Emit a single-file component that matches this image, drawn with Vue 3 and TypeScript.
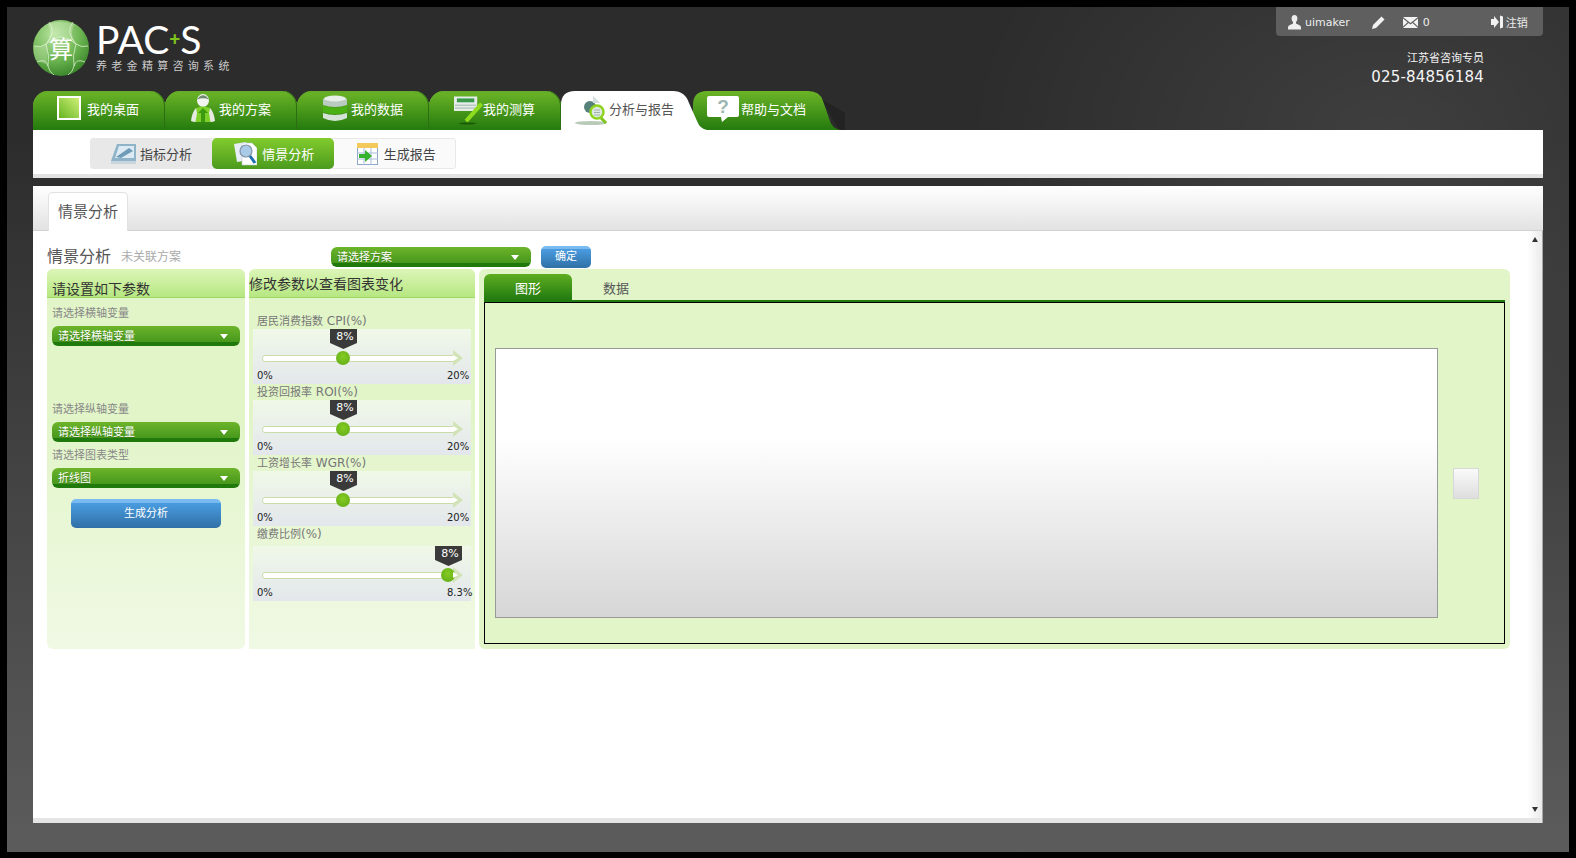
<script setup lang="ts">
import { ref } from 'vue'

interface SliderItem {
  name: string
  unit: string
  flag: string
  left: number
  max: string
  tall?: boolean
}

const navTabs = [
  { key: 'desk', label: '我的桌面' },
  { key: 'plan', label: '我的方案' },
  { key: 'data', label: '我的数据' },
  { key: 'calc', label: '我的测算' },
]

const sliders = ref<SliderItem[]>([
  { name: '居民消费指数', unit: ' CPI(%)', flag: '8%', left: 90, max: '20%' },
  { name: '投资回报率', unit: ' ROI(%)', flag: '8%', left: 90, max: '20%' },
  { name: '工资增长率', unit: ' WGR(%)', flag: '8%', left: 90, max: '20%' },
  { name: '缴费比例', unit: '(%)', flag: '8%', left: 195, max: '8.3%', tall: true },
])
</script>

<template>
  <div class="frame">
    <header class="top">
      <div class="logo">
        <svg class="globe" width="56" height="56" viewBox="0 0 56 56">
          <defs>
            <radialGradient id="ball" cx="0.38" cy="0.25" r="0.85">
              <stop offset="0" stop-color="#b9e4a0" />
              <stop offset="0.55" stop-color="#6db552" />
              <stop offset="1" stop-color="#2d7a20" />
            </radialGradient>
          </defs>
          <circle cx="28" cy="28" r="28" fill="url(#ball)" />
          <path d="M14 4Q26 0 42 4Q36 12 42 22Q28 12 14 22Q20 12 14 4Z" fill="#d8f0c6" fill-opacity="0.35" />
          <path d="M1 26Q8 28 13 24Q16 34 13 44Q6 42 3 40Q0 34 1 26Z" fill="#d8f0c6" fill-opacity="0.3" />
          <g fill="none" stroke="#e9f8dd" stroke-opacity="0.7" stroke-width="1">
            <path d="M16 2Q24 12 13 24Q8 28 1 26" />
            <path d="M40 2Q32 12 43 24Q48 28 55 26" />
            <path d="M4 42Q13 38 15 46Q16 52 21 55" />
            <path d="M52 42Q43 38 41 46Q40 52 35 55" />
            <path d="M13 24Q28 10 43 24" />
            <path d="M13 24Q17 36 15 46M43 24Q39 36 41 46" />
          </g>
          <text x="28" y="38" text-anchor="middle" font-size="24" fill="#fff" font-family="'Noto Sans CJK SC', sans-serif">算</text>
        </svg>
        <div class="brand">
          <div class="brand-name"><span>PAC</span><span class="plus">+</span><span>S</span></div>
          <div class="brand-sub">养老金精算咨询系统</div>
        </div>
      </div>
      <div class="top-right">
        <div class="userbar">
          <svg class="ub-user" width="13" height="15" viewBox="0 0 13 15"><path d="M6.500 0C4.600 0 3.600 1.500 3.600 3.400C3.600 5 4.300 6.200 5 7V8.500L1 10.500C.3 11 0 11.600 0 13V14.500H13V13C13 11.600 12.700 11 12 10.500L8 8.500V7C8.700 6.200 9.400 5 9.400 3.400C9.400 1.500 8.400 0 6.500 0Z" fill="#eee" /></svg>
          <span class="ub-name">uimaker</span>
          <svg class="ub-pen" width="13" height="13" viewBox="0 0 13 13"><path d="M9.500 .5L12.500 3.500L4 12L0 13L1 9Z" fill="#f2f2f2" /></svg>
          <svg class="ub-mail" width="15" height="11" viewBox="0 0 15 11"><path d="M0 0H15L7.500 6ZM0 1.600L4.600 5.300L0 9.400ZM15 1.600L10.400 5.300L15 9.400ZM5.500 6L7.500 7.600L9.500 6L15 11H0Z" fill="#f2f2f2" /></svg>
          <span class="ub-count">0</span>
          <svg class="ub-exit" width="12" height="14" viewBox="0 0 12 14"><path d="M0 4H3V1L8 7L3 13V10H0ZM9 .5L12 1.500V12.500L9 13.500Z" fill="#f2f2f2" /></svg>
          <span class="ub-out">注销</span>
        </div>
        <div class="contact">江苏省咨询专员</div>
        <div class="phone">025-84856184</div>
      </div>
    </header>

    <nav class="tabs">
      <div v-for="tab in navTabs" :key="tab.key" class="tab" :class="'tab-' + tab.key">
        <span class="tab-ico">
          <svg v-if="tab.key === 'desk'" width="24" height="24" viewBox="0 0 24 24">
            <defs>
              <linearGradient id="desk" x1="1" y1="0" x2="0" y2="1">
                <stop offset="0" stop-color="#d3f27a" />
                <stop offset="1" stop-color="#61b21f" />
              </linearGradient>
            </defs>
            <rect x="1" y="1" width="22" height="22" fill="url(#desk)" stroke="#fff" stroke-width="2" />
          </svg>
          <svg v-else-if="tab.key === 'plan'" width="24" height="29" viewBox="0 0 24 29">
            <ellipse cx="12" cy="6.500" rx="6" ry="6.500" fill="#f2f4ef" />
            <path d="M6 5.500Q12 -3 18 5.500Q12 3 6 5.500Z" fill="#6f8a70" />
            <path d="M5 14Q12 11 19 14L20 28H4Z" fill="#7dd02a" />
            <path d="M5 14Q1 18 0 27Q2 28 4.500 28L6 19ZM19 14Q23 18 24 27Q22 28 19.500 28L18 19Z" fill="#e6eae2" />
            <path d="M12 14L7 19H10V28H14V19H17Z" fill="#3c9a10" />
          </svg>
          <svg v-else-if="tab.key === 'data'" width="24" height="27" viewBox="0 0 24 27">
            <path d="M0 4Q12 -2 24 4V10Q12 14 0 10Z" fill="#b9cbc0" />
            <ellipse cx="12" cy="3.500" rx="11" ry="3" fill="#e8efe8" />
            <path d="M0 11Q12 15 24 11V17Q12 21 0 17Z" fill="#49b014" />
            <path d="M0 18Q12 22 24 18V23Q12 29 0 23Z" fill="#d5e2d8" />
          </svg>
          <svg v-else width="30" height="29" viewBox="0 0 30 29">
            <rect x="0" y="0" width="24" height="15" fill="#e6ecea" />
            <rect x="3" y="2" width="18" height="4" fill="#3a9a4a" />
            <path d="M1 9H23M1 12H23" stroke="#9db4a8" />
            <path d="M11 24L27 6L30 9L14 27Z" fill="#8fdc1e" />
            <ellipse cx="14" cy="28" rx="9" ry="1" fill="#1a5a08" />
          </svg>
        </span>
        <span class="tab-text">{{ tab.label }}</span>
      </div>
      <div class="tab tab-active">
        <svg class="tab-shape" width="146" height="39" viewBox="0 0 146 39"><path d="M0 39V14Q0 0 14 0H112Q124 0 128 12L136 30Q139 38 146 39Z" fill="#fff" /></svg>
        <span class="tab-ico tab-ico-small">
          <svg width="36" height="30" viewBox="0 0 36 30">
            <path d="M0 25H24V0H18L14 4Z" fill="#fff" />
            <circle cx="17" cy="11" r="6" fill="#55817a" />
            <path d="M20 0L27 7H20Z" fill="#d2dedb" />
            <ellipse cx="18" cy="27" rx="16" ry="2" fill="#8ba888" fill-opacity="0.6" />
            <circle cx="24" cy="16" r="6.500" fill="#dfe9e4" stroke="#8fd41f" stroke-width="2.500" />
            <path d="M21 14H27M21 16.500H27M21 19H27" stroke="#9fb4aa" />
            <path d="M28 22L33 27" stroke="#7fc51d" stroke-width="3" />
          </svg>
        </span>
        <span class="tab-text">分析与报告</span>
      </div>
      <div class="tab tab-help">
        <svg class="tab-shape" width="152" height="39" viewBox="0 0 152 39">
          <defs>
            <linearGradient id="helpBg" x1="0" y1="0" x2="0" y2="1">
              <stop offset="0" stop-color="#6cb527" />
              <stop offset="1" stop-color="#247a0e" />
            </linearGradient>
          </defs>
          <path d="M128 8L152 22V39H146Z" fill="#232323" />
          <path d="M0 39V14Q0 0 14 0H115Q127 0 130 10L137 30Q139 37 147 39Z" fill="url(#helpBg)" />
        </svg>
        <span class="tab-ico tab-ico-small">
          <svg width="34" height="30" viewBox="0 0 34 30">
            <path d="M3 0H31Q33 0 33 2V19Q33 21 31 21H22L16 26L15 21H3Q1 21 1 19V2Q1 0 3 0Z" fill="#fff" />
            <text x="17" y="17" text-anchor="middle" font-size="19" font-weight="700" fill="#9cb8b0" font-family="'Liberation Sans', sans-serif">?</text>
          </svg>
        </span>
        <span class="tab-text">帮助与文档</span>
      </div>
    </nav>

    <div class="subnav">
      <div class="subnav-group">
        <div class="sub sub-first">
          <svg width="25" height="22" viewBox="0 0 25 22">
            <path d="M6 1H25V18H0Z" fill="#8fb3c8" />
            <path d="M8 3H23V15H4Z" fill="#dcebf3" />
            <path d="M5 14L18 5L22 8L10 15Z" fill="#6e9bb8" />
            <rect x="0" y="18" width="25" height="3" fill="#c9d6dd" />
          </svg>
          <span>指标分析</span>
        </div>
        <div class="sub sub-on">
          <svg width="23" height="24" viewBox="0 0 23 24">
            <path d="M0 2L12 0L15 18L3 20Z" fill="#e8eef5" />
            <path d="M8 1H18L23 6V23H8Z" fill="#fff" stroke="#b9c6d4" stroke-width=".6" />
            <circle cx="12" cy="9" r="6" fill="#a9cbe8" stroke="#8193a8" stroke-width="1.200" />
            <path d="M16 14L21 21" stroke="#1d6fb0" stroke-width="3" />
          </svg>
          <span>情景分析</span>
        </div>
        <div class="sub sub-last">
          <svg width="21" height="22" viewBox="0 0 21 22">
            <rect x=".5" y=".5" width="20" height="21" fill="#fff" stroke="#8da6c9" />
            <rect x="0" y="0" width="21" height="5" fill="#f4c95c" />
            <path d="M7 5V22M14 5V22M0 10H21M0 16H21" stroke="#a7bcd8" />
            <path d="M2 11H8V7L15 13L8 19V15H2Z" fill="#36b32c" />
          </svg>
          <span>生成报告</span>
        </div>
      </div>
    </div>

    <section class="main">
      <div class="main-head">
        <div class="main-tab">情景分析</div>
      </div>
      <div class="main-body">
        <div class="page">
          <div class="title-row">
            <div class="title-block">
              <span class="title">情景分析</span>
              <span class="title-note">未关联方案</span>
            </div>
            <div class="select select-plan">请选择方案<i class="caret"></i></div>
            <div class="btn btn-ok">确定</div>
          </div>

          <div class="panels">
            <div class="panel panel-left">
              <div class="panel-head head-low">请设置如下参数</div>
              <div class="field-label first">请选择横轴变量</div>
              <div class="select">请选择横轴变量<i class="caret"></i></div>
              <div class="field-label second">请选择纵轴变量</div>
              <div class="select">请选择纵轴变量<i class="caret"></i></div>
              <div class="field-label">请选择图表类型</div>
              <div class="select">折线图<i class="caret"></i></div>
              <div class="btn btn-gen">生成分析</div>
            </div>

            <div class="panel panel-mid">
              <div class="panel-head head-high">修改参数以查看图表变化</div>
              <div class="slider-list">
                <div v-for="s in sliders" :key="s.name">
                  <div class="slider-label" :class="{ tall: s.tall }">{{ s.name }}<span class="unit">{{ s.unit }}</span></div>
                  <div class="slider-box">
                    <div class="flag" :style="{ left: s.left - 13 + 'px' }">{{ s.flag }}</div>
                    <div class="track"></div>
                    <div class="thumb" :style="{ left: s.left - 7 + 'px' }"></div>
                    <div class="ticks">
                      <span class="tick-min">0%</span>
                      <span>{{ s.max }}</span>
                    </div>
                  </div>
                </div>
              </div>
            </div>

            <div class="panel panel-right">
              <div class="chart-tabs">
                <div class="chart-tab on">图形</div>
                <div class="chart-tab">数据</div>
              </div>
              <div class="chart-box">
                <div class="chart"></div>
                <div class="chart-side"></div>
              </div>
            </div>
          </div>
        </div>
        <div class="scroll">
          <i class="arrow up"></i>
          <i class="arrow down"></i>
        </div>
      </div>
      <div class="main-foot"></div>
    </section>
  </div>
</template>

<style>
html,
body {
  background: #000;
  overflow: hidden;
}
</style>

<style scoped>
.frame {
  box-sizing: border-box;
  width: 1562px;
  height: 845px;
  margin: 7px 0 0 7px;
  padding: 0 26px;
  overflow: hidden;
  font-family: "DejaVu Sans", "Noto Sans CJK SC", sans-serif;
  background:
    radial-gradient(ellipse 420px 300px at 1380px 130px, rgba(255, 255, 255, 0.09), rgba(255, 255, 255, 0) 100%),
    linear-gradient(#2c2c2c 0, #2c2c2c 130px, #5c5c5c 100%);
}

/* header */
.top {
  display: flex;
  justify-content: space-between;
  height: 84px;
}
.logo {
  display: flex;
  padding-top: 13px;
}
.globe {
  flex: none;
}
.brand {
  margin-left: 7px;
}
.brand-name {
  display: flex;
  align-items: center;
  height: 38px;
  font-family: Lato, sans-serif;
  font-weight: 400;
  font-size: 39px;
  line-height: 38px;
  color: #fff;
}
.plus {
  font-size: 19px;
  font-weight: 900;
  color: #7fc51d;
}
.brand-sub {
  margin-top: 2px;
  font-size: 11px;
  line-height: 14px;
  letter-spacing: 4.300px;
  color: #c9c9c9;
  white-space: nowrap;
}
.top-right {
  display: flex;
  flex-direction: column;
  align-items: flex-end;
  width: 267px;
}
.userbar {
  position: relative;
  width: 267px;
  height: 29px;
  flex: none;
  background: #5f5f5f;
  border-radius: 0 0 4px 4px;
  display: flex;
  align-items: center;
  padding: 1px 0 0 12px;
  box-sizing: border-box;
  font-size: 11px;
  color: #eee;
  white-space: nowrap;
}
.ub-name {
  margin-left: 4px;
}
.ub-pen {
  margin-left: 22px;
}
.ub-mail {
  margin-left: 18px;
}
.ub-count {
  margin-left: 5px;
}
.ub-exit {
  margin-left: 61px;
}
.ub-out {
  margin-left: 3px;
}
.contact {
  margin: 14px 59px 0 0;
  font-size: 11px;
  line-height: 18px;
  color: #f2f2f2;
}
.phone {
  margin-right: 59px;
  font-size: 15px;
  line-height: 19px;
  letter-spacing: 0.200px;
  color: #f5f5f5;
}

/* main nav */
.tabs {
  display: flex;
  height: 39px;
}
.tab {
  position: relative;
  display: flex;
  align-items: center;
  width: 132px;
  box-sizing: border-box;
  padding-left: 14px;
  border-radius: 15px 15px 0 0;
  background: linear-gradient(#6cb527, #247a0e);
  box-shadow: inset -1px 0 0 #2d6e12, inset 0 2px 0 #66ab2a;
  font-size: 13px;
  color: #fff;
}
.tab-ico {
  width: 40px;
  height: 34px;
  flex: none;
  display: flex;
  align-items: center;
  justify-content: flex-start;
  margin-top: -5px;
}
.tab-desk .tab-ico {
  padding-left: 10px;
  box-sizing: border-box;
}
.tab-plan .tab-ico {
  padding-left: 12px;
  box-sizing: border-box;
}
.tab-data .tab-ico {
  padding-left: 12px;
  box-sizing: border-box;
}
.tab-calc .tab-ico {
  padding-left: 11px;
  box-sizing: border-box;
  margin-top: 0;
}
.tab-text {
  position: relative;
  margin-top: -4px;
  white-space: nowrap;
}
.tab-active,
.tab-help {
  background: none;
  box-shadow: none;
  padding-left: 12px;
}
.tab-active {
  z-index: 2;
  color: #555;
}
.tab-shape {
  position: absolute;
  left: 0;
  top: 0;
}
.tab-active .tab-ico,
.tab-help .tab-ico {
  position: relative;
  width: 36px;
  margin-top: 0;
  justify-content: center;
}

/* sub nav */
.subnav {
  height: 44px;
  box-sizing: border-box;
  background: #fff;
  padding: 8px 0 0 57px;
  box-shadow: 0 4px 0 #e2e2e2;
}
.subnav-group {
  display: flex;
  width: 366px;
  height: 31px;
  box-sizing: border-box;
  border: 1px solid #e8e8e8;
  border-radius: 3px;
  background: #fafafa;
}
.sub {
  display: flex;
  align-items: center;
  gap: 4px;
  width: 122px;
  padding-left: 20px;
  box-sizing: border-box;
  font-size: 13px;
  color: #444;
}
.sub-first {
  background: #e8e8e8;
}
.sub-on {
  margin: -1px 0;
  height: 31px;
  padding-left: 22px;
  gap: 5px;
  border-radius: 5px;
  background: linear-gradient(#82cc2e, #4b9a1c);
  color: #fff;
}
.sub-last {
  padding-left: 23px;
  gap: 6px;
}

/* content */
.main {
  margin-top: 12px;
}
.main-head {
  height: 45px;
  box-sizing: border-box;
  padding: 6px 0 0 15px;
  background: linear-gradient(#fff, #e2e2e2);
  border-bottom: 1px solid #d2d2d2;
}
.main-tab {
  width: 80px;
  height: 39px;
  box-sizing: border-box;
  border: 1px solid #e2e2e2;
  border-bottom: 0;
  border-radius: 5px 5px 0 0;
  background: #fff;
  font-size: 15px;
  line-height: 38px;
  text-align: center;
  color: #555;
}
.main-body {
  display: flex;
  height: 587px;
  background: #fff;
}
.page {
  flex: 1;
  padding-left: 14px;
}
.scroll {
  width: 16px;
  flex: none;
  display: flex;
  flex-direction: column;
  justify-content: space-between;
  align-items: center;
  padding: 6px 0;
  box-sizing: border-box;
  background: linear-gradient(90deg, #fff, #ebebeb);
  border-right: 1px solid #a8a8a8;
}
.arrow {
  width: 0;
  height: 0;
  border-left: 3.500px solid transparent;
  border-right: 3.500px solid transparent;
}
.arrow.up {
  border-bottom: 5px solid #333;
}
.arrow.down {
  border-top: 5px solid #333;
}
.main-foot {
  height: 5px;
  background: #e5e5e5;
  border-right: 1px solid #a8a8a8;
}
.title-row {
  display: flex;
  align-items: center;
  height: 38px;
  padding-top: 13px;
  box-sizing: border-box;
}
.title-block {
  width: 284px;
  flex: none;
  display: flex;
  align-items: center;
  gap: 10px;
  margin-top: -3px;
}
.title {
  font-size: 16px;
  color: #555;
}
.title-note {
  margin-top: 1px;
  font-size: 12px;
  color: #aaa;
}

.select {
  position: relative;
  height: 20px;
  box-sizing: border-box;
  padding-left: 6px;
  border-radius: 6px;
  background: linear-gradient(#6cb42a, #48981d 80%, #1f7a0b 80%, #1f7a0b);
  font-size: 11px;
  line-height: 21px;
  color: #fff;
  text-shadow: 0 1px 0 rgba(0, 0, 0, 0.25);
  white-space: nowrap;
}
.caret {
  position: absolute;
  right: 12px;
  top: 8px;
  width: 0;
  height: 0;
  border-left: 4px solid transparent;
  border-right: 4px solid transparent;
  border-top: 5px solid #fff;
}
.select-plan {
  width: 200px;
  flex: none;
}
.btn {
  box-sizing: border-box;
  border-radius: 5px;
  background: linear-gradient(#7bbdf2, #78b9ef 12%, #4a9ce0 14%, #2f70a6);
  text-align: center;
  font-size: 11px;
  color: #fff;
}
.btn-ok {
  width: 50px;
  height: 22px;
  margin-left: 10px;
  line-height: 22px;
}
.btn-gen {
  width: 150px;
  height: 29px;
  margin: 11px 0 0 24px;
  line-height: 29px;
}

/* panels */
.panels {
  display: flex;
  gap: 4px;
  width: 1463px;
}
.panel {
  height: 380px;
  box-sizing: border-box;
  background: linear-gradient(#e2f5c9 40%, #f0f9e4);
}
.panel-left {
  width: 198px;
  border-radius: 6px;
}
.panel-mid {
  width: 226px;
  border-radius: 6px 6px 0 0;
}
.panel-right {
  width: 1031px;
  padding: 5px;
  border-radius: 6px;
  background: #e2f5c9;
}
.panel-head {
  height: 29px;
  box-sizing: border-box;
  border-radius: 6px 6px 0 0;
  border-bottom: 1px solid #9fd668;
  background: linear-gradient(#dcf5b8, #b6e781);
  font-size: 14px;
  color: #333;
}
.head-low {
  padding: 11px 0 0 5px;
  line-height: 18px;
}
.head-high {
  padding: 6px 0 0;
  line-height: 18px;
}
.field-label {
  height: 16px;
  margin: 5px 0 0 5px;
  font-size: 11px;
  line-height: 17px;
  color: #888;
}
.field-label.first {
  margin-top: 7px;
}
.field-label.second {
  margin-top: 55px;
}
.panel-left .select {
  width: 188px;
  margin: 5px 0 0 5px;
}

.slider-list {
  padding: 15px 4px 0;
}
.slider-label {
  height: 16px;
  padding-left: 4px;
  font-size: 11px;
  line-height: 17px;
  color: #777;
  white-space: pre;
}
.unit {
  font-size: 12px;
}
.slider-label.tall {
  height: 20px;
}
.slider-box {
  position: relative;
  height: 55px;
  background: linear-gradient(#f0f8e8, #e3e7ec);
}
.flag {
  position: absolute;
  top: 0;
  width: 27px;
  height: 20px;
  padding: 1px 0 0 3px;
  box-sizing: border-box;
  background: #3a3a3a;
  clip-path: polygon(0 0, 100% 0, 100% 70%, 50% 100%, 0 70%);
  font-size: 11px;
  line-height: 13px;
  text-align: center;
  color: #fff;
}
.track {
  position: absolute;
  left: 9px;
  top: 26px;
  width: 195px;
  height: 7px;
  box-sizing: border-box;
  border: 1px solid #cbdcaa;
  border-radius: 3px;
  background: #fff;
}
.track::after {
  content: "";
  position: absolute;
  left: 190px;
  top: -6px;
  border-left: 10px solid #d3e3b8;
  border-top: 8px solid transparent;
  border-bottom: 8px solid transparent;
}
.track::before {
  content: "";
  position: absolute;
  z-index: 1;
  left: 190px;
  top: -1px;
  border-left: 5px solid #fff;
  border-top: 3px solid transparent;
  border-bottom: 3px solid transparent;
}
.thumb {
  position: absolute;
  top: 22px;
  width: 14px;
  height: 14px;
  border-radius: 50%;
  background: radial-gradient(circle at 50% 40%, #84cb22, #5fa917);
}
.ticks {
  position: absolute;
  left: 4px;
  top: 40px;
  display: flex;
  font-size: 10px;
  line-height: 14px;
  color: #222;
}
.tick-min {
  width: 190px;
}

.chart-tabs {
  display: flex;
  height: 28px;
  box-sizing: border-box;
  border-bottom: 2px solid #217a10;
}
.chart-tab {
  width: 88px;
  font-size: 13px;
  line-height: 29px;
  text-align: center;
  color: #555;
  border-radius: 6px 6px 0 0;
}
.chart-tab.on {
  background: linear-gradient(#5eae21, #227a10);
  color: #fff;
}
.chart-box {
  display: flex;
  height: 342px;
  box-sizing: border-box;
  border: 1px solid #000;
  padding: 45px 0 0 10px;
}
.chart {
  width: 943px;
  height: 270px;
  box-sizing: border-box;
  border: 1px solid #999;
  background: linear-gradient(#fff 33%, #d6d6d6);
}
.chart-side {
  align-self: flex-start;
  width: 26px;
  height: 31px;
  margin: 120px 0 0 15px;
  box-sizing: border-box;
  border: 1px solid #d8d8d8;
  background: linear-gradient(#fafafa, #dedede);
}
</style>
